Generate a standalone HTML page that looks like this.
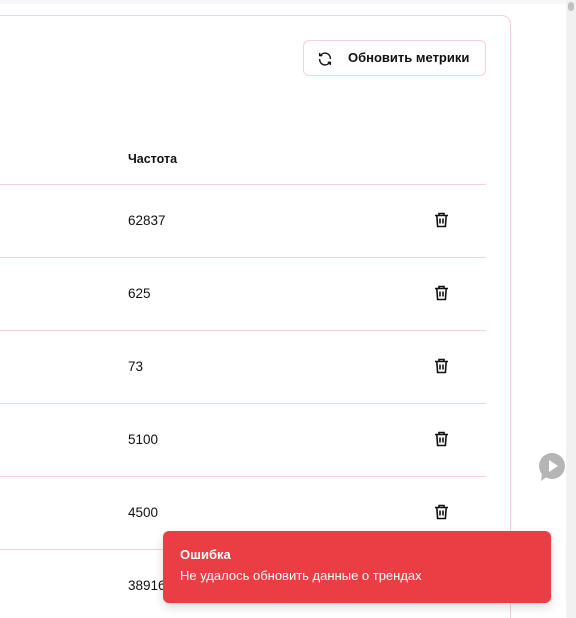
<!DOCTYPE html>
<html><head><meta charset="utf-8"><style>
*{box-sizing:border-box;margin:0;padding:0}
html,body{width:576px;height:618px;overflow:hidden}
body{background:#fff;font-family:"Liberation Sans","DejaVu Sans",sans-serif;color:#111;position:relative}
.top{position:absolute;left:0;top:0;width:566px;height:4px;background:#f7f7f7}
.sb{position:absolute;right:0;top:0;width:10px;height:618px;background:#f1f1f1}
.sb .th{position:absolute;left:2px;top:2px;width:6px;height:9px;background:#c1c1c1;border-radius:3px}
.card{position:absolute;left:-20px;top:15px;width:531px;height:620px;border:1px solid #f7d0dc;border-radius:9px}
.btn{position:absolute;left:303px;top:40px;width:183px;height:36px;border:1px solid #f7d0dc;border-radius:6px;font-size:13px;font-weight:bold;line-height:34px;padding-left:44px}
.btn svg{position:absolute;left:13px;top:10px}
.th1{position:absolute;left:128px;top:152px;font-size:12.5px;font-weight:bold}
.line{position:absolute;left:0;width:486px;height:1px;background:#f7d0dc}
.v{position:absolute;left:128px;font-size:13.5px}
.tr{position:absolute;left:434px}
.toast{position:absolute;left:163px;top:531px;width:388px;height:72px;background:#ea3e44;border-radius:6px;color:#fff;padding:16px 17px;box-shadow:0 4px 10px rgba(0,0,0,.15)}
.toast b{display:block;font-size:13px;margin-bottom:5px}
.toast span{font-size:13px}
.chat{position:absolute;left:538px;top:453px}
</style></head><body>
<div class="top"></div>
<div class="card"></div>
<div class="btn"><svg width="16" height="16" viewBox="0 0 24 24" fill="none" stroke="#111" stroke-width="2.2" stroke-linecap="round" stroke-linejoin="round"><path d="M20 11a8 8 0 0 0-14.5-4.5M4 4v3h3"/><path d="M4 13a8 8 0 0 0 14.5 4.5M20 20v-3h-3"/></svg>Обновить метрики</div>
<div class="th1">Частота</div>
<div class="line" style="top:184px"></div>
<div class="line" style="top:257px"></div>
<div class="line" style="top:330px"></div>
<div class="line" style="top:403px"></div>
<div class="line" style="top:476px"></div>
<div class="line" style="top:549px"></div>
<div class="v" style="top:213px">62837</div>
<div class="v" style="top:286px">625</div>
<div class="v" style="top:359px">73</div>
<div class="v" style="top:432px">5100</div>
<div class="v" style="top:505px">4500</div>
<div class="v" style="top:578px">38916</div>
<svg class="tr" style="top:212px" width="15" height="16" viewBox="0 0 15 16" fill="none" stroke="#111" stroke-width="1.6"><path d="M1 3.5h13M5 3.5V1.5h5v2M2.8 3.5l.8 11h7.8l.8-11M6 6.5v5M9 6.5v5"/></svg>
<svg class="tr" style="top:285px" width="15" height="16" viewBox="0 0 15 16" fill="none" stroke="#111" stroke-width="1.6"><path d="M1 3.5h13M5 3.5V1.5h5v2M2.8 3.5l.8 11h7.8l.8-11M6 6.5v5M9 6.5v5"/></svg>
<svg class="tr" style="top:358px" width="15" height="16" viewBox="0 0 15 16" fill="none" stroke="#111" stroke-width="1.6"><path d="M1 3.5h13M5 3.5V1.5h5v2M2.8 3.5l.8 11h7.8l.8-11M6 6.5v5M9 6.5v5"/></svg>
<svg class="tr" style="top:431px" width="15" height="16" viewBox="0 0 15 16" fill="none" stroke="#111" stroke-width="1.6"><path d="M1 3.5h13M5 3.5V1.5h5v2M2.8 3.5l.8 11h7.8l.8-11M6 6.5v5M9 6.5v5"/></svg>
<svg class="tr" style="top:504px" width="15" height="16" viewBox="0 0 15 16" fill="none" stroke="#111" stroke-width="1.6"><path d="M1 3.5h13M5 3.5V1.5h5v2M2.8 3.5l.8 11h7.8l.8-11M6 6.5v5M9 6.5v5"/></svg>
<svg class="chat" width="28" height="30" viewBox="0 0 28 30"><circle cx="14" cy="13" r="13" fill="#b5b5b5"/><path d="M4 20l-1 8 7-5z" fill="#b5b5b5"/><path d="M11 7v12l9-6z" fill="#fff"/></svg>
<div class="sb"><div class="th"></div></div>
<div class="toast"><b>Ошибка</b><span>Не удалось обновить данные о трендах</span></div>
</body></html>
